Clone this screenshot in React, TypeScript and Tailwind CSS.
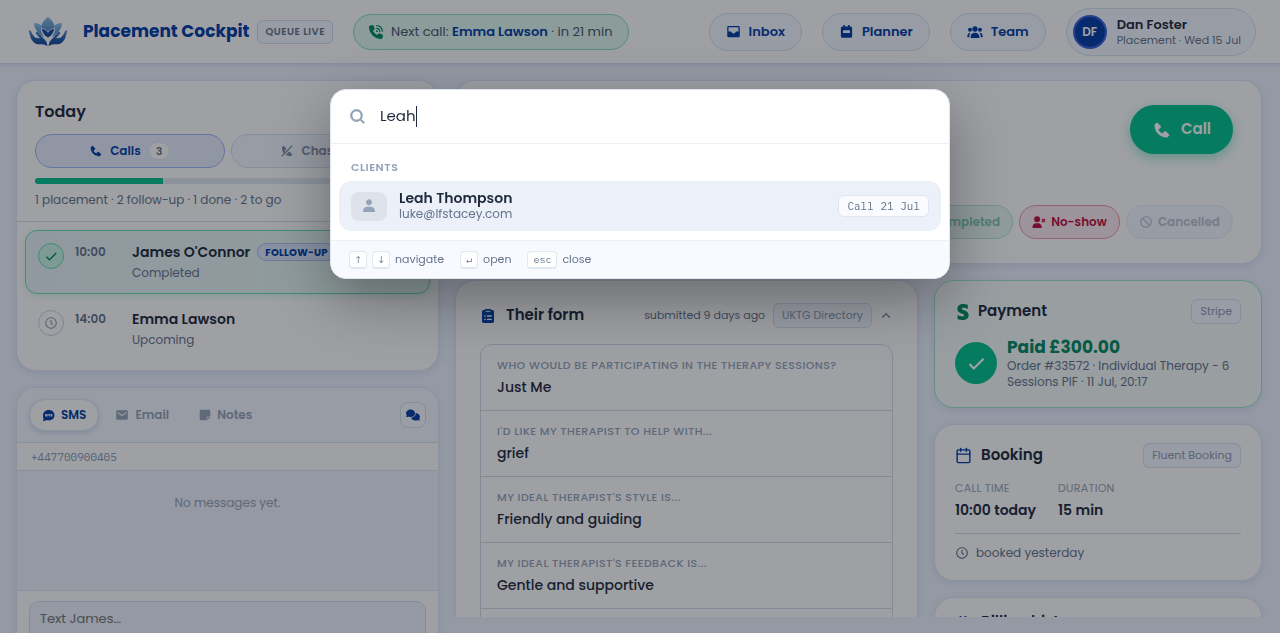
import type { ReactNode } from "react";
import {
  BiBlock,
  BiCheck,
  BiChevronUp,
  BiSearch,
  BiSolidEnvelope,
  BiSolidInbox,
  BiSolidPhone,
  BiSolidPhoneOff,
  BiSolidUser,
  BiTimeFive,
} from "react-icons/bi";
import { FaComments, FaNoteSticky, FaPhoneVolume, FaStripeS } from "react-icons/fa6";
import { Calendar } from "lucide-react";

const CARD = "rounded-[20px] border border-[#dfe6f3] bg-white shadow-[0_2px_8px_rgba(0,61,165,0.10)]";
const MONO = "font-['IBM_Plex_Mono','JetBrains_Mono','Liberation_Mono',monospace]";

function LotusLogo() {
  return (
    <svg viewBox="0 0 60 45" className="h-[30px] w-10 shrink-0" aria-hidden="true">
      <defs>
        <linearGradient id="petal" x1="0" y1="0" x2="0" y2="1">
          <stop offset="0" stopColor="#8fc0ea" />
          <stop offset="1" stopColor="#4a86c8" />
        </linearGradient>
        <linearGradient id="hand" x1="0" y1="0" x2="0" y2="1">
          <stop offset="0" stopColor="#5b8fd0" />
          <stop offset="0.6" stopColor="#1d58a8" />
          <stop offset="1" stopColor="#124393" />
        </linearGradient>
      </defs>
      <path d="M30 0C23 5 20 11 20 17c4 0 8 2 10 5 2-3 6-5 10-5 0-6-3-12-10-17Z" fill="url(#petal)" />
      <path d="M9 9c6 0 10 2 12 5-3 4-1 11 3 16-4-2-7-6-10-8-3-4-5-8-5-13Z" fill="url(#petal)" />
      <path d="M51 9c-6 0-10 2-12 5 3 4 1 11-3 16 4-2 7-6 10-8 3-4 5-8 5-13Z" fill="url(#petal)" />
      <path d="M21 18c4 0 7 2 9 6 2-4 5-6 9-6 0 5-4 10-9 13-5-3-9-8-9-13Z" fill="#124a9c" />
      <path d="M1 20c2-1 4 1 5 5l5 6 7 1-6-7c-1-3 1-4 3-2l8 9c4 3 6 7 6 12-4-3-7-3-12-3-7 0-10-4-13-10L1 20Z" fill="url(#hand)" />
      <path d="M59 20c-2-1-4 1-5 5l-5 6-7 1 6-7c1-3-1-4-3-2l-8 9c-4 3-6 7-6 12 4-3 7-3 12-3 7 0 10-4 13-10l3-11Z" fill="url(#hand)" />
    </svg>
  );
}

function PlannerIcon({ className }: { className: string }) {
  return (
    <svg viewBox="0 0 24 24" fill="currentColor" className={className} aria-hidden="true">
      <path
        fillRule="evenodd"
        d="M7 1.5h2.5V4h5V1.5H17V4h1.5A2.5 2.5 0 0 1 21 6.500V19.500A2.500 2.500 0 0 1 18.500 22h-13A2.500 2.500 0 0 1 3 19.500V6.500A2.500 2.500 0 0 1 5.500 4H7V1.500ZM6.500 10v4.500h11V10h-11Z"
      />
    </svg>
  );
}

function GroupIcon({ className }: { className: string }) {
  return (
    <svg viewBox="0 0 24 24" fill="currentColor" className={className} aria-hidden="true">
      <path d="M12 3.500A4 4 0 1 1 12 11.500 4 4 0 0 1 12 3.500ZM4.500 5.500a3 3 0 1 1 0 6 3 3 0 0 1 0-6ZM19.500 5.500a3 3 0 1 1 0 6 3 3 0 0 1 0-6ZM5.500 18.500c0-3.300 2.900-5.500 6.500-5.500s6.500 2.200 6.500 5.500V21h-13v-2.500ZM.5 18.500c0-3 1.500-5 4.500-5.300C4.100 14.600 3.500 16.200 3.500 18v2H.5v-1.500ZM23.500 18.500c0-3-1.500-5-4.500-5.300.9 1.400 1.500 3 1.500 4.800v2h3v-1.500Z" />
    </svg>
  );
}

function NoShowIcon({ className }: { className: string }) {
  return (
    <svg viewBox="0 0 26 26" fill="currentColor" className={className} aria-hidden="true">
      <circle cx="9.500" cy="8" r="5.500" />
      <path d="M1 22.500c0-4.500 3-7 6.500-7h4c3.500 0 6.500 2.500 6.500 7V24H1v-1.500Z" />
      <path d="m18.500 7.500 5.500 5.500m0-5.500-5.500 5.500" stroke="currentColor" strokeWidth="2.200" />
    </svg>
  );
}

function SmsIcon({ className }: { className: string }) {
  return (
    <svg viewBox="0 0 24 24" fill="currentColor" className={className} aria-hidden="true">
      <path
        fillRule="evenodd"
        d="M12.500 2C18.600 2 23 6.200 23 11.500S18.600 21 12.500 21c-1.400 0-2.700-.2-3.900-.6C6.800 21.800 4.500 22.500 1.500 22.500c1-1.300 1.500-3 1.400-4.700A9 9 0 0 1 2 11.500C2 6.200 6.400 2 12.500 2ZM6 9v5h3V9H6Zm4 0v5h1.400v-3l1.100 1.500 1.100-1.500v3H15V9h-1.400l-1.100 1.600L11.400 9H10Zm6 0v5h3V9h-3Z"
      />
    </svg>
  );
}

function FormIcon({ className }: { className: string }) {
  return (
    <svg viewBox="0 0 24 24" fill="currentColor" className={className} aria-hidden="true">
      <path
        fillRule="evenodd"
        d="M9 1.500h6A2 2 0 0 1 17 3h1.500A2.500 2.500 0 0 1 21 5.500v14.500a2.500 2.500 0 0 1-2.500 2.500h-13A2.500 2.500 0 0 1 3 20V5.500A2.500 2.500 0 0 1 5.500 3H7a2 2 0 0 1 2-1.500ZM8.500 4.200v1.600h7V4.200h-7ZM6.500 11v2h2v-2h-2Zm4 0v2h7v-2h-7Zm-4 5v2h2v-2h-2Zm4 0v2h7v-2h-7Z"
      />
    </svg>
  );
}

function NavButton({ icon, children }: { icon: ReactNode; children: ReactNode }) {
  return (
    <button className="flex h-[38px] items-center gap-2 rounded-full border border-[#d8e2f0] bg-[#f5f8ff] px-4 text-[13px] font-semibold text-[#003da5]">
      {icon}
      {children}
    </button>
  );
}

function Tag({ children }: { children: ReactNode }) {
  return (
    <span className="flex h-[25px] items-center rounded-md border border-[#d8e2f0] bg-[#f5f8ff] px-2 text-[11px] whitespace-nowrap text-[#8c9bb4]">
      {children}
    </span>
  );
}

function Header() {
  return (
    <header className="flex h-16 shrink-0 items-center border-b border-[#d8e0ee] bg-white pr-6 pl-7 shadow-[0_1px_4px_rgba(0,61,165,0.12)]">
      <LotusLogo />
      <h1 className="ml-[15px] text-[17px] font-bold whitespace-nowrap text-[#003da5]">Placement Cockpit</h1>
      <span className="ml-2 flex h-6 items-center rounded-md border border-[#cfdcf0] bg-[#f5f8ff] px-[7px] text-[10px] font-semibold tracking-wider whitespace-nowrap text-[#64748b]">
        QUEUE LIVE
      </span>
      <div className="ml-5 flex h-9 items-center gap-2 rounded-full border border-[#85dfc0] bg-[#e0f8ee] px-[15px] text-[13px] whitespace-nowrap text-[#475569]">
        <FaPhoneVolume className="size-[14px] text-[#008a62]" />
        <span>
          Next call: <strong className="font-semibold text-[#003da5]">Emma Lawson</strong> · in 21 min
        </span>
      </div>
      <nav className="ml-auto flex items-center gap-5">
        <NavButton icon={<BiSolidInbox className="size-[15px]" />}>Inbox</NavButton>
        <NavButton icon={<PlannerIcon className="size-[15px]" />}>Planner</NavButton>
        <NavButton icon={<GroupIcon className="size-4" />}>Team</NavButton>
        <button className="flex h-12 items-center gap-2.5 rounded-full border border-[#d8e2f0] bg-[#f5f8ff] pr-[14px] pl-1.5 text-left">
          <span className="flex size-[34px] items-center justify-center rounded-full border-2 border-[#3a5fe0] bg-[#003da5] text-xs font-semibold text-white">
            DF
          </span>
          <span className="whitespace-nowrap">
            <span className="block text-[13px] leading-4 font-semibold text-[#1e293b]">Dan Foster</span>
            <span className="block text-[11px] leading-[14px] text-[#64748b]">Placement · Wed 15 Jul</span>
          </span>
        </button>
      </nav>
    </header>
  );
}

function TodayCard() {
  return (
    <section className={`${CARD} h-[291px] shrink-0`}>
      <div className="border-b border-[#d5deec] px-[18px] pt-[19px] pb-3">
        <h2 className="text-base leading-6 font-semibold text-[#1e293b]">Today</h2>
        <div className="mt-2.5 grid grid-cols-2 gap-1.5">
          <button className="flex h-[34px] items-center justify-center gap-[7px] rounded-full border border-[#9db6f5] bg-[#e8effd] text-xs font-semibold text-[#003da5]">
            <BiSolidPhone className="size-[14px]" />
            Calls
            <span className="flex h-[18px] items-center rounded-full border border-[#e2e8f0] bg-white px-[7px] text-[11px] text-[#64748b]">
              3
            </span>
          </button>
          <button className="flex h-[34px] items-center justify-center gap-[7px] rounded-full border border-[#d8e2f0] bg-[#f5f8ff] text-xs font-semibold text-[#8290a8]">
            <BiSolidPhoneOff className="size-[14px]" />
            Chase
            <span className="flex h-[18px] items-center rounded-full border border-[#e2e8f0] bg-white px-[7px] text-[11px]">
              2
            </span>
          </button>
        </div>
        <div className="mt-[10px] h-1.5 overflow-hidden rounded-full bg-[#e2eaf3]">
          <div className="h-full w-1/3 bg-[#00c48c]" />
        </div>
        <p className="mt-[7px] text-xs leading-[18px] text-[#64748b]">1 placement · 2 follow-up · 1 done · 2 to go</p>
      </div>
      <ul className="p-2">
        <li className="flex h-16 rounded-xl border border-[#67dcb4] bg-linear-to-r from-[#eaf4f8] to-[#e6f8f2] px-3 pt-3 shadow-[0_2px_6px_rgba(16,185,129,0.15)]">
          <span className="flex size-[26px] items-center justify-center rounded-full border border-[#67dcb4] bg-[#c9f5e4] text-[#008a62]">
            <BiCheck className="size-[18px]" />
          </span>
          <span className="ml-[11px] w-[57px] text-xs leading-[18px] font-semibold text-[#64748b]">10:00</span>
          <div>
            <div className="flex h-[18px] items-center gap-[7px]">
              <span className="text-sm font-semibold text-[#1e293b]">James O'Connor</span>
              <span className="flex h-[18px] items-center rounded-full border border-[#a9c1f5] bg-[#dce8fd] px-[7px] text-[10px] font-bold tracking-wide text-[#003da5]">
                FOLLOW-UP
              </span>
            </div>
            <p className="mt-[3px] text-xs leading-[18px] text-[#64748b]">Completed</p>
          </div>
        </li>
        <li className="mt-[3px] flex h-16 rounded-xl border border-transparent px-3 pt-3">
          <span className="flex size-[26px] items-center justify-center rounded-full border border-[#cbd5e1] text-[#94a3b8]">
            <BiTimeFive className="size-[14px]" />
          </span>
          <span className="ml-[11px] w-[57px] text-xs leading-[18px] font-semibold text-[#64748b]">14:00</span>
          <div>
            <span className="block text-sm leading-[18px] font-semibold text-[#1e293b]">Emma Lawson</span>
            <p className="mt-[3px] text-xs leading-[18px] text-[#64748b]">Upcoming</p>
          </div>
        </li>
      </ul>
    </section>
  );
}

function MessagesCard() {
  return (
    <section className={`${CARD} shrink-0 overflow-hidden`}>
      <div className="flex h-[55px] items-center border-b border-[#dbe3f0] bg-[#f5f8ff] px-3">
        <button className="flex h-8 items-center gap-1.5 rounded-full border border-[#dbe6f5] bg-white px-3 text-xs font-semibold text-[#003da5] shadow-[0_2px_5px_rgba(0,61,165,0.15)]">
          <SmsIcon className="size-[13px]" />
          SMS
        </button>
        <button className="ml-4 flex h-8 items-center gap-1.5 text-xs font-semibold text-[#94a3b8]">
          <BiSolidEnvelope className="size-[14px]" />
          Email
        </button>
        <button className="ml-[30px] flex h-8 items-center gap-1.5 text-xs font-semibold text-[#94a3b8]">
          <FaNoteSticky className="size-3" />
          Notes
        </button>
        <button
          aria-label="Open conversations"
          className="ml-auto flex size-[26px] items-center justify-center rounded-lg border border-[#d3e0ef] bg-[#fafcff] text-[#003da5]"
        >
          <FaComments className="size-[14px]" />
        </button>
      </div>
      <p className={`${MONO} h-7 border-b border-[#e2e8f4] px-[14px] text-[11px] leading-7 text-[#8495b0]`}>
        +447700900405
      </p>
      <div className="h-[120px] border-b border-[#e2e8f4] bg-[#eef3ff] pt-[22px] text-center text-xs leading-5 text-[#94a3b8]">
        No messages yet.
      </div>
      <div className="px-3 py-2.5">
        <textarea
          aria-label="Message"
          placeholder="Text James…"
          className="block h-[70px] w-full resize-none rounded-[10px] border border-[#d3dff0] bg-[#eef3ff] px-[10px] py-[7px] text-[13px] leading-5 placeholder:text-[#757575]"
        />
      </div>
    </section>
  );
}

function ClientCard() {
  return (
    <section className={`${CARD} flex h-[184px] shrink-0 flex-col items-end justify-between px-7 py-6`}>
      <button className="flex h-[49px] items-center gap-[9px] rounded-full bg-[#00c48c] px-[22px] text-[15px] font-semibold text-white shadow-[0_4px_12px_rgba(0,196,140,0.4)]">
        <BiSolidPhone className="size-5" />
        Call
      </button>
      <div className="flex gap-1.5">
        <button className="flex h-[34px] items-center gap-[5px] rounded-full border border-[#b5e8d5] bg-[#eaf8f3] px-3 text-xs font-semibold text-[#82c9b0]">
          <BiCheck className="size-[14px]" />
          Completed
        </button>
        <button className="flex h-[34px] items-center gap-[5px] rounded-full border border-[#f094ac] bg-[#fdebf0] px-3 text-xs font-semibold text-[#be0a3c]">
          <NoShowIcon className="size-[14px]" />
          No-show
        </button>
        <button className="flex h-[34px] items-center gap-[5px] rounded-full border border-[#e8edf7] bg-[#f5f8ff] px-3 text-xs font-semibold text-[#b9c3d2]">
          <BiBlock className="size-[14px]" />
          Cancelled
        </button>
      </div>
    </section>
  );
}

const ANSWERS = [
  ["WHO WOULD BE PARTICIPATING IN THE THERAPY SESSIONS?", "Just Me"],
  ["I'D LIKE MY THERAPIST TO HELP WITH...", "grief"],
  ["MY IDEAL THERAPIST'S STYLE IS...", "Friendly and guiding"],
  ["MY IDEAL THERAPIST'S FEEDBACK IS...", "Gentle and supportive"],
];

function FormCard() {
  return (
    <section className={`${CARD} px-6 pt-[22px]`}>
      <div className="flex h-[25px] items-center">
        <FormIcon className="size-4 text-[#003da5]" />
        <h2 className="ml-2.5 text-[15px] font-semibold text-[#1e293b]">Their form</h2>
        <span className="mr-2 ml-auto text-[11px] text-[#64748b]">submitted 9 days ago</span>
        <Tag>UKTG Directory</Tag>
        <button aria-label="Collapse" className="-mr-0.5 ml-[5px] text-[#8290a8]">
          <BiChevronUp className="size-[18px]" />
        </button>
      </div>
      <dl className="mt-4 rounded-t-xl border border-[#d3dcea] pb-10">
        {ANSWERS.map(([question, answer]) => (
          <div key={question} className="h-[66px] border-b border-[#d3dcea] px-4 pt-[11px]">
            <dt className="text-[11px] leading-[18px] font-medium tracking-[0.04em] text-[#94a3b8]">{question}</dt>
            <dd className="mt-[3px] text-sm leading-5 font-medium text-[#1e293b]">{answer}</dd>
          </div>
        ))}
      </dl>
    </section>
  );
}

function SideCards() {
  return (
    <div className="flex flex-col gap-4">
      <section className="rounded-[20px] border border-[#a0e5cc] bg-[#f7fcfb] px-5 pt-[18px] pb-[17px] shadow-[0_2px_8px_rgba(0,61,165,0.10)]">
        <div className="flex h-[25px] items-center">
          <FaStripeS className="size-4 text-[#008a62]" />
          <h2 className="ml-[7px] text-[15px] font-semibold text-[#1e293b]">Payment</h2>
          <span className="ml-auto">
            <Tag>Stripe</Tag>
          </span>
        </div>
        <div className="mt-3 flex items-center gap-2.5">
          <span className="flex size-[42px] shrink-0 items-center justify-center rounded-full bg-[#00c48c] text-white">
            <BiCheck className="size-[26px]" />
          </span>
          <div>
            <p className="text-[17px] leading-[22px] font-bold text-[#008a62]">Paid £300.00</p>
            <p className="text-xs leading-4 text-[#64748b]">Order #33572 · Individual Therapy - 6 Sessions PIF · 11 Jul, 20:17</p>
          </div>
        </div>
      </section>
      <section className={`${CARD} h-[157px] px-5 pt-[18px]`}>
        <div className="flex h-[25px] items-center">
          <Calendar className="size-[17px] text-[#003da5]" />
          <h2 className="ml-[9px] text-[15px] font-semibold text-[#1e293b]">Booking</h2>
          <span className="ml-auto">
            <Tag>Fluent Booking</Tag>
          </span>
        </div>
        <dl className="mt-3 flex gap-[22px] border-b border-[#d3dcea] pb-3">
          <div>
            <dt className="text-[11px] leading-4 tracking-wide text-[#94a3b8]">CALL TIME</dt>
            <dd className="mt-[3px] text-sm leading-[22px] font-semibold text-[#1e293b]">10:00 today</dd>
          </div>
          <div>
            <dt className="text-[11px] leading-4 tracking-wide text-[#94a3b8]">DURATION</dt>
            <dd className="mt-[3px] text-sm leading-[22px] font-semibold text-[#1e293b]">15 min</dd>
          </div>
        </dl>
        <p className="mt-[9px] flex items-center gap-[7px] text-xs leading-5 text-[#64748b]">
          <BiTimeFive className="size-[14px]" />
          booked yesterday
        </p>
      </section>
      <section className={`${CARD} px-5 pt-3`}>
        <div className="flex h-[25px] items-center">
          <PlannerIcon className="size-4 text-[#003da5]" />
          <h2 className="ml-2.5 text-[15px] font-semibold text-[#1e293b]">Billing history</h2>
        </div>
      </section>
    </div>
  );
}

function Key({ children }: { children: ReactNode }) {
  return (
    <kbd
      className={`${MONO} flex h-[18px] min-w-[18px] items-center justify-center rounded border border-b-2 border-[#e2e8f0] bg-white px-[5px] text-[10px] text-[#64748b]`}
    >
      {children}
    </kbd>
  );
}

function SearchDialog() {
  return (
    <div className="fixed inset-0 flex items-start justify-center bg-[#0d111c]/40 pt-[89px]">
      <div
        role="dialog"
        aria-label="Search"
        className="w-[620px] max-w-full overflow-hidden rounded-2xl border border-[#dfe6f0] bg-white shadow-[0_20px_60px_rgba(0,0,0,0.35)]"
      >
        <label className="flex h-[54px] items-center border-b border-[#edf0f4] px-[18px]">
          <BiSearch className="size-[18px] stroke-current stroke-1 text-[#94a3b8]" />
          <span className="sr-only">Search clients</span>
          <input
            defaultValue="Leah"
            className="ml-[13px] max-w-full text-[15px] text-[#1e293b] outline-none [field-sizing:content]"
          />
          <span className="h-[21px] w-px bg-[#1e293b]" />
        </label>
        <div className="px-2 pt-[13px] pb-[9px]">
          <h3 className="px-3 text-[11px] leading-5 font-semibold tracking-wider text-[#94a3b8]">CLIENTS</h3>
          <a href="#leah-thompson" className="mt-1 flex h-[50px] items-center rounded-xl bg-[#ecf1f9] px-3">
            <span className="flex h-[29px] w-9 items-center justify-center rounded-lg bg-[#dde2eb] text-[#94a3b8]">
              <BiSolidUser className="size-4" />
            </span>
            <span className="ml-3">
              <span className="block text-sm leading-4 font-semibold text-[#1e293b]">Leah Thompson</span>
              <span className="block text-xs leading-4 text-[#64748b]">luke@lfstacey.com</span>
            </span>
            <span
              className={`${MONO} ml-auto flex h-[22px] items-center rounded-md border border-[#dfe6f0] bg-[#f9fbff] px-2 text-[11px] text-[#64748b]`}
            >
              Call 21 Jul
            </span>
          </a>
        </div>
        <div className="flex h-[38px] items-center gap-4 border-t border-[#edf0f4] bg-[#f8faff] px-[18px] text-[11px] text-[#64748b]">
          <span className="flex items-center gap-[5px]">
            <Key>↑</Key>
            <Key>↓</Key>
            navigate
          </span>
          <span className="flex items-center gap-[5px]">
            <Key>↵</Key>
            open
          </span>
          <span className="flex items-center gap-[5px]">
            <Key>esc</Key>
            close
          </span>
        </div>
      </div>
    </div>
  );
}

export default function App() {
  return (
    <div className="flex h-screen flex-col overflow-hidden bg-[#eff4ff] font-['Poppins','Inter',sans-serif]">
      <Header />
      <main className="grid min-h-0 flex-1 grid-cols-[423px_minmax(0,1fr)] gap-4 py-4 pr-[18px] pl-4">
        <div className="flex min-h-0 flex-col gap-4">
          <TodayCard />
          <MessagesCard />
        </div>
        <div className="-mx-2 flex min-h-0 flex-col gap-4 overflow-hidden px-2">
          <ClientCard />
          <div className="grid grid-cols-[minmax(0,1fr)_328px] items-start gap-4">
            <FormCard />
            <SideCards />
          </div>
        </div>
      </main>
      <SearchDialog />
    </div>
  );
}
